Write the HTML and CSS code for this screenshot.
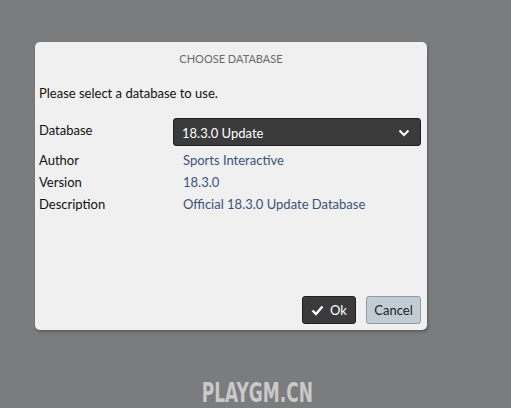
FILE: index.html
```
<!DOCTYPE html>
<html>
<head>
<meta charset="utf-8">
<link rel="stylesheet" href="styles.css">
</head>
<body>
<div class="screen">
  <div class="dialog">
    <div class="title">CHOOSE DATABASE</div>
    <p class="intro">Please select a database to use.</p>
    <div class="row first">
      <div class="label">Database</div>
      <div class="select">
        <span>18.3.0 Update</span>
        <svg width="12" height="8" viewBox="0 0 12 8"><path d="M1.5 1.5 L6 6 L10.5 1.5" fill="none" stroke="#fff" stroke-width="2"/></svg>
      </div>
    </div>
    <div class="row">
      <div class="label">Author</div>
      <div class="value">Sports Interactive</div>
    </div>
    <div class="row">
      <div class="label">Version</div>
      <div class="value">18.3.0</div>
    </div>
    <div class="row">
      <div class="label">Description</div>
      <div class="value">Official 18.3.0 Update Database</div>
    </div>
    <div class="buttons">
      <button class="btn ok"><svg width="13" height="11" viewBox="0 0 13 11"><path d="M1.5 5.5 L5 9 L11.5 1.5" fill="none" stroke="#fff" stroke-width="2.4"/></svg>Ok</button>
      <button class="btn cancel">Cancel</button>
    </div>
  </div>
  <div class="watermark"><span>PLAYGM.CN</span></div>
</div>
</body>
</html>
```
FILE: styles.css
```
* { box-sizing: border-box; }
html, body { margin: 0; padding: 0; }
body {
  width: 511px; height: 408px; overflow: hidden;
  background: #7b7c7e;
  font-family: Lato, "Open Sans", sans-serif;
}
.screen {
  position: relative;
  width: 511px; height: 408px;
  padding: 42px 0 0 35px;
}
.dialog {
  width: 392px; height: 288px;
  background: #f0f0f0;
  border-radius: 5px;
  box-shadow: 1px 2px 3px rgba(0,0,0,0.25);
  display: flex; flex-direction: column;
  padding: 0 6px 6px 4px;
}
.title {
  text-align: center;
  font-size: 11px;
  color: #6a6a6a;
  margin-top: 10px;
  height: 14px;
  line-height: 14px;
  padding-left: 2px;
}
.intro {
  margin: 19px 0 0 0;
  font-size: 13px;
  line-height: 16px;
  color: #111;
}
.row {
  display: flex;
  align-items: center;
  height: 22px;
  font-size: 13px;
  color: #111;
}
.row.first { height: 28px; margin-top: 17px; margin-bottom: 3px; }
.row.first .label { margin-top: -4px; }
.label { width: 134px; }
.select {
  width: 248px;
  height: 28px;
  background: #3b3b3b;
  border: 1px solid #1f1f1f;
  border-radius: 3px;
  color: #fff;
  display: flex; align-items: center; justify-content: space-between;
  padding: 1px 10px 0 8px;
  font-size: 13px;
}
.value { color: #3a5378; padding-left: 10px; }
.buttons {
  margin-top: auto;
  display: flex; justify-content: flex-end; gap: 10px;
}
.btn {
  height: 28px;
  border-radius: 3px;
  font-family: inherit;
  font-size: 13px;
  display: flex; align-items: center; justify-content: center;
  padding: 0;
}
.ok {
  width: 54px;
  background: #3b3b3b;
  border: 1px solid #1f1f1f;
  color: #fff;
  gap: 6px;
}
.cancel {
  width: 55px;
  background: #c1ccd4;
  border: 1px solid #8c9ca8;
  color: #222;
}
.watermark {
  position: absolute;
  left: 0; right: 0; top: 377px;
  text-align: center;
  font-family: "DejaVu Sans", sans-serif;
  font-weight: bold;
  font-size: 27px;
  line-height: 32px;
  color: #c9c9c9;
  padding-left: 4px;
}
.watermark span {
  display: inline-block;
  transform: scaleX(0.63);
}
```
